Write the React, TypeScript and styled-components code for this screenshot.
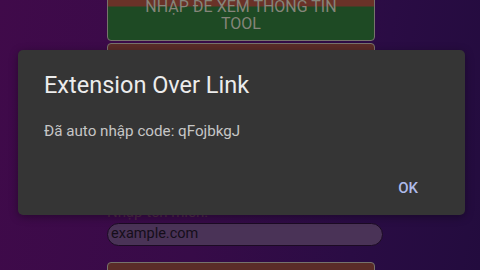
import styled, { createGlobalStyle } from 'styled-components';

const GlobalStyle = createGlobalStyle`
	html, body {
		margin: 0;
		padding: 0;
		width: 480px;
		height: 270px;
		overflow: hidden;
		font-family: Roboto, 'Noto Sans', 'Liberation Sans', sans-serif;
	}
`;

const Screen = styled.div`
	position: relative;
	width: 480px;
	height: 270px;
	overflow: hidden;
	background: linear-gradient(100deg, #400a4a 0%, #370b48 45%, #2a0c44 75%, #230c3e 100%);
`;

const Form = styled.div`
	display: flex;
	flex-direction: column;
	width: 276px;
	margin: -11px 0 0 107px;
`;

const ActionButton = styled.div<{ $tone: 'green' | 'brown' }>`
	box-sizing: border-box;
	width: 268px;
	height: ${(props) => (props.$tone === 'green' ? '52px' : '44px')};
	border: 1px solid #77736c;
	border-radius: 4px;
	background: ${(props) =>
		props.$tone === 'green'
			? 'linear-gradient(180deg, #6a3228 0px, #6a3228 16px, #1e4a24 17px, #1e4a24 100%)'
			: '#5a2c28'};
	color: #86857a;
	font-size: 16px;
	line-height: 17.5px;
	text-align: center;
	text-transform: uppercase;
	display: flex;
	align-items: center;
	justify-content: center;
	padding: 0 12px;
`;

const TopSpacer = styled.div`
	height: 2px;
`;

const FieldLabel = styled.div`
	margin-top: 116px;
	font-size: 15px;
	line-height: 18px;
	color: #4d2c48;
`;

const UrlInput = styled.div`
	box-sizing: border-box;
	margin-top: 2px;
	height: 23px;
	border: 1.5px solid #1c0b24;
	border-radius: 12px;
	background: #4a3357;
	color: #150e1a;
	font-size: 14.5px;
	line-height: 20px;
	padding-left: 3px;
`;

const BottomGap = styled.div`
	height: 16px;
`;

const Dialog = styled.div`
	position: absolute;
	top: 50px;
	left: 18px;
	width: 447px;
	height: 165px;
	box-sizing: border-box;
	background: #353535;
	border-radius: 5px;
	padding: 22px 26px 18px;
	display: flex;
	flex-direction: column;
	box-shadow: 0 2px 8px rgba(0, 0, 0, 0.35);
`;

const Title = styled.div`
	font-size: 23.5px;
	line-height: 27px;
	color: #ececec;
`;

const Message = styled.div`
	margin-top: 22px;
	font-size: 15.2px;
	line-height: 20px;
	color: #c6c6c6;
`;

const Actions = styled.div`
	margin-top: auto;
	display: flex;
	justify-content: flex-end;
	padding-right: 13px;
`;

const DialogButton = styled.div`
	font-size: 15px;
	font-weight: 500;
	line-height: 18px;
	color: #aebbea;
	padding: 0 8px;
`;

export default function App() {
	return (
		<>
			<GlobalStyle />
			<Screen>
				<Form>
					<ActionButton $tone="green">
						NHẬP ĐỂ XEM THÔNG TIN
						<br />
						TOOL
					</ActionButton>
					<TopSpacer />
					<ActionButton $tone="brown" />
					<FieldLabel>Nhập tên miền:</FieldLabel>
					<UrlInput>example.com</UrlInput>
					<BottomGap />
					<ActionButton $tone="brown" />
				</Form>
				<Dialog>
					<Title>Extension Over Link</Title>
					<Message>Đã auto nhập code: qFojbkgJ</Message>
					<Actions>
						<DialogButton>OK</DialogButton>
					</Actions>
				</Dialog>
			</Screen>
		</>
	);
}
